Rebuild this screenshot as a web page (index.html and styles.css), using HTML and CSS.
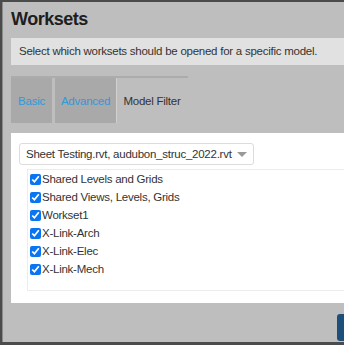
FILE: index.html
```html
<!DOCTYPE html>
<html lang="en">
<head>
    <meta charset="UTF-8">
    <title>Worksets</title>
    <link rel="stylesheet" href="styles.css">
</head>
<body>

<div class="dialog">
    <h1 class="title">Worksets</h1>
    <div class="desc">Select which worksets should be opened for a specific model.</div>

    <div class="tabs">
        <div class="tab">Basic</div>
        <div class="tab">Advanced</div>
        <div class="tab active">Model Filter</div>
    </div>

    <div class="panel">
        <div class="select">
            <span>Sheet Testing.rvt, audubon_struc_2022.rvt</span>
            <span class="caret"></span>
        </div>
        <div class="list">
            <label class="item"><input type="checkbox" checked>Shared Levels and Grids</label>
            <label class="item"><input type="checkbox" checked>Shared Views, Levels, Grids</label>
            <label class="item"><input type="checkbox" checked>Workset1</label>
            <label class="item"><input type="checkbox" checked>X-Link-Arch</label>
            <label class="item"><input type="checkbox" checked>X-Link-Elec</label>
            <label class="item"><input type="checkbox" checked>X-Link-Mech</label>
        </div>
    </div>

    <div class="footer">
        <button class="btn"></button>
    </div>
</div>

</body>
</html>
```

FILE: styles.css
```css
body {
    margin: 0;
    background: #4b4b4b;
    font-family: 'Liberation Sans', Arial, sans-serif;
    color: #333;
    overflow: hidden;
    height: 345px;
}
.dialog {
    margin: 2px 0 0 2px;
    width: 380px;
    height: 340px;
    background: #bebebe;
    border-left: 1px solid #8a8a8a;
    padding-left: 8px;
    box-sizing: border-box;
}
.title {
    margin: 0;
    padding-top: 7px;
    height: 29px;
    font-size: 18px;
    letter-spacing: -0.5px;
    font-weight: bold;
    color: #1e1e1e;
}
.desc {
    height: 27px;
    line-height: 27px;
    background: #e1e1e1;
    padding-left: 8px;
    font-size: 11.5px;
    letter-spacing: -0.25px;
    color: #333;
    white-space: nowrap;
}
.tabs {
    display: flex;
    margin-top: 11px;
    width: 177px;
    border-top: 2px solid #acacac;
    height: 45px;
}
.tab {
    display: flex;
    align-items: center;
    justify-content: center;
    font-size: 11.5px;
    letter-spacing: -0.25px;
    color: #2f9ad8;
    background: #a9a9a9;
}
.tab:nth-child(1) { width: 41px; }
.tab:nth-child(2) { width: 61px; margin-left: 3px; }
.tab.active {
    width: 71px;
    color: #333;
    background: #bebebe;
    border-left: 1px solid #d0d0d0;
    box-sizing: border-box;
}
.panel {
    margin-top: 10px;
    background: #fff;
    height: 170px;
    padding: 10px 0 0 8px;
    box-sizing: border-box;
}
.select {
    display: flex;
    align-items: center;
    justify-content: space-between;
    width: 235px;
    height: 22px;
    border: 1px solid #dcdcdc;
    border-radius: 3px;
    padding: 0 6px 0 6px;
    box-sizing: border-box;
    font-size: 11.5px;
    letter-spacing: -0.25px;
    white-space: nowrap;
    color: #333;
}
.caret {
    width: 0;
    height: 0;
    border-left: 5px solid transparent;
    border-right: 5px solid transparent;
    border-top: 5px solid #999;
}
.list {
    margin: 4px 0 0 8px;
    height: 122px;
    border: 1px solid #ececec;
    border-right: none;
    padding: 0 0 0 2px;
    box-sizing: border-box;
}
.item {
    display: flex;
    align-items: center;
    height: 18px;
    font-size: 11.5px;
    letter-spacing: -0.25px;
    color: #333;
}
.item input {
    width: 11px;
    height: 11px;
    margin: 0 1px 0 0;
    accent-color: #0a75f0;
}
.footer {
    margin-top: 11px;
    padding-left: 326px;
}
.btn {
    width: 40px;
    height: 27px;
    border: none;
    border-radius: 3px;
    background: #1e4f7b;
}
```
